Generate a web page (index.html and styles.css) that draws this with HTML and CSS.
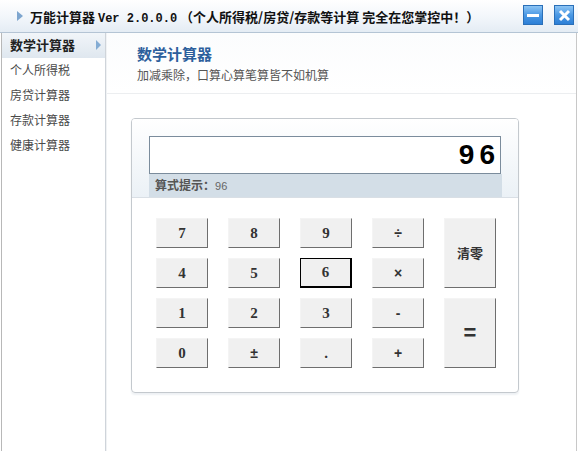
FILE: index.html
```html
<!DOCTYPE html>
<html lang="zh-CN">
    <head>
        <meta charset="utf-8">
        <title>万能计算器</title>
        <link rel="stylesheet" href="styles.css">
    </head>
    <body>
        <!-- title bar with window buttons -->
        <div class="titlebar">
            <span class="title-arrow"></span>
            <span class="title-text">万能计算器 <span class="mono">Ver 2.0.0.0</span> （个人所得税/房贷/存款等计算 完全在您掌控中！）</span>
            <div class="win-buttons">
                <span class="win-btn win-min"></span>
                <span class="win-btn win-close">
                    <svg width="13" height="13" viewBox="0 0 13 13"><path d="M2 2 L11 11 M11 2 L2 11" stroke="#fff" stroke-width="3"/></svg>
                </span>
            </div>
        </div>

        <div class="main">
            <!-- left menu -->
            <ul class="sidebar">
                <li class="menu-item active">数学计算器<span class="menu-arrow"></span></li>
                <li class="menu-item">个人所得税</li>
                <li class="menu-item">房贷计算器</li>
                <li class="menu-item">存款计算器</li>
                <li class="menu-item">健康计算器</li>
            </ul>

            <div class="content">
                <div class="page-header">
                    <h1>数学计算器</h1>
                    <p>加减乘除，口算心算笔算皆不如机算</p>
                </div>

                <div class="calc">
                    <div class="calc-top">
                        <div class="display">96</div>
                        <div class="hint"><b>算式提示：</b><span class="hint-value">96</span></div>
                    </div>
                    <div class="keys">
                        <button class="key">7</button>
                        <button class="key">8</button>
                        <button class="key">9</button>
                        <button class="key op">÷</button>
                        <button class="key tall cjk">清零</button>
                        <button class="key">4</button>
                        <button class="key">5</button>
                        <button class="key focus">6</button>
                        <button class="key op">×</button>
                        <button class="key">1</button>
                        <button class="key">2</button>
                        <button class="key">3</button>
                        <button class="key op">-</button>
                        <button class="key tall eq">=</button>
                        <button class="key">0</button>
                        <button class="key op">±</button>
                        <button class="key">.</button>
                        <button class="key op">+</button>
                    </div>
                </div>
            </div>
        </div>
    </body>
</html>
```

FILE: styles.css
```css
/* page frame */
html, body{
    margin: 0;
    padding: 0;
    height: 100%;
    background-color: #fff;
}
body{
    width: 578px;
    height: 451px;
    overflow: hidden;
    font-family: "Noto Sans CJK SC", sans-serif;
    color: #333;
    display: flex;
    flex-direction: column;
}

/* title bar */
.titlebar{
    box-sizing: border-box;
    height: 33px;
    flex: none;
    display: flex;
    align-items: center;
    padding-left: 17px;
    background: linear-gradient(to bottom, #ffffff, #f3f7fb 50%, #e4ecf4);
    border-bottom: 1px solid #b4c4d4;
}
.title-arrow{
    width: 0;
    height: 0;
    border-top: 5px solid transparent;
    border-bottom: 5px solid transparent;
    border-left: 6px solid #7ea6cf;
    margin-right: 7px;
}
.title-text{
    font-size: 13px;
    font-weight: bold;
    color: #111;
    white-space: nowrap;
}
.mono{
    font-family: "Liberation Mono", monospace;
    font-size: 12px;
}
.win-buttons{
    margin-left: auto;
    display: flex;
    gap: 11px;
    margin-right: 4px;
    margin-top: -2px;
}
.win-btn{
    box-sizing: border-box;
    width: 20px;
    height: 20px;
    display: flex;
    align-items: center;
    justify-content: center;
    border: 1px solid #2a6fb8;
    background: linear-gradient(to bottom, #8cc4f4, #4a98e4 50%, #2d7fd6);
}
.win-min::before{
    content: "";
    width: 12px;
    height: 3px;
    background-color: #fff;
}

/* body area */
.main{
    flex: 1;
    display: flex;
    box-sizing: border-box;
    width: 576px;
    margin-left: 1px;
    border-left: 1px solid #b8b8b8;
    border-right: 1px solid #c8c8c8;
}
.sidebar{
    box-sizing: border-box;
    width: 104px;
    flex: none;
    margin: 0;
    padding: 0;
    list-style: none;
    border-right: 1px solid #cfd4da;
}
.menu-item{
    height: 25px;
    line-height: 23px;
    padding-left: 8px;
    font-size: 12px;
    color: #4a4a4a;
    position: relative;
}
.menu-item.active{
    font-size: 13px;
    font-weight: bold;
    color: #222;
    background: linear-gradient(to bottom, #f1f5f9, #dfe7ef);
}
.menu-arrow{
    position: absolute;
    right: 4px;
    top: 7px;
    border-top: 5px solid transparent;
    border-bottom: 5px solid transparent;
    border-left: 5px solid #84acd4;
}

.content{
    flex: 1;
    border-left: 1px solid #f0f2f4;
}
.page-header{
    box-sizing: border-box;
    height: 61px;
    padding: 10px 0 0 30px;
    background: linear-gradient(to bottom, #fbfcfd, #ffffff);
    border-bottom: 1px solid #eceef0;
}
.page-header h1{
    margin: 0;
    font-size: 15px;
    line-height: 22px;
    color: #2d5f9c;
}
.page-header p{
    margin: 0;
    font-size: 12px;
    line-height: 20px;
    color: #555;
}

/* calculator card */
.calc{
    box-sizing: border-box;
    width: 388px;
    height: 275px;
    margin: 24px 0 0 24px;
    border: 1px solid #c4c9ce;
    border-radius: 4px;
    box-shadow: 0 2px 2px #eef1f4;
    overflow: hidden;
}
.calc-top{
    padding: 17px 0 0 17px;
    background: linear-gradient(to bottom, #ffffff, #ebf1f6);
    border-bottom: 1px solid #d9dfe5;
}
.display{
    box-sizing: border-box;
    width: 352px;
    height: 38px;
    border: 1px solid #7b8c9c;
    background-color: #fff;
    text-align: right;
    font-family: "Liberation Sans", Arial, sans-serif;
    font-weight: bold;
    font-size: 28px;
    line-height: 36px;
    letter-spacing: 5px;
    color: #000;
    padding-right: 0;
}
.hint{
    width: 353px;
    height: 23px;
    line-height: 22px;
    padding-left: 6px;
    box-sizing: border-box;
    background-color: #d3dee7;
    font-size: 12px;
    color: #555;
}
.hint-value{
    font-family: "Liberation Sans", Arial, sans-serif;
    font-size: 11px;
    color: #666;
}

/* key grid */
.keys{
    display: grid;
    grid-template-columns: repeat(5, 52px);
    grid-auto-rows: 30px;
    gap: 10px 20px;
    padding: 20px 0 0 24px;
}
.key{
    box-sizing: border-box;
    margin: 0;
    padding: 0;
    background-color: #f0f0f0;
    border: 1px solid #f4f4f4;
    border-right-color: #6e6e6e;
    border-bottom-color: #6e6e6e;
    font-family: "Liberation Serif", serif;
    font-weight: bold;
    font-size: 15px;
    color: #333;
}
.key.op{
    font-family: "Liberation Sans", sans-serif;
    font-size: 14px;
}
.key.focus{
    border: 1px solid #000;
    border-right-width: 2px;
    border-bottom-width: 2px;
}
.key.tall{
    grid-row: span 2;
}
.key.cjk{
    font-family: "Noto Sans CJK SC", sans-serif;
    font-size: 13px;
    padding-bottom: 2px;
}
.key.eq{
    font-family: "Liberation Sans", sans-serif;
    font-size: 22px;
}
```
